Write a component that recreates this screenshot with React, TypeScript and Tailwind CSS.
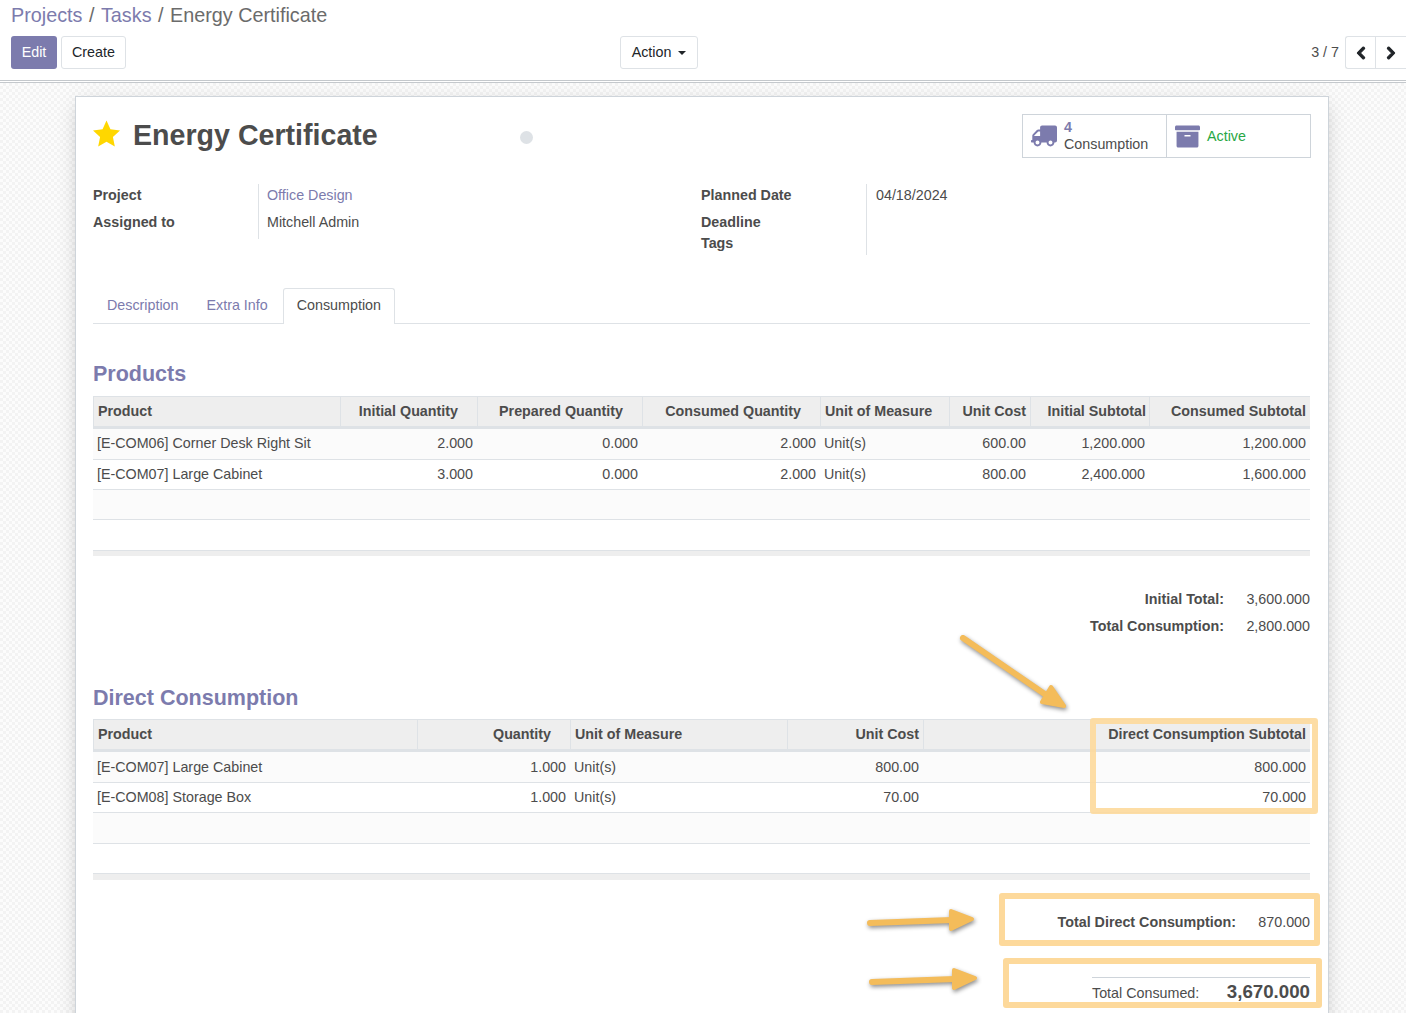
import { FaArchive, FaChevronLeft, FaChevronRight, FaTruck } from "react-icons/fa";

const productCols = [
  { label: "Product", w: "w-[248px]", th: "text-left pl-1 pr-1", td: "text-left pl-1 pr-1" },
  { label: "Initial Quantity", w: "w-[137px]", th: "text-right pr-[19px]", td: "text-right pr-[5px]" },
  { label: "Prepared Quantity", w: "w-[165px]", th: "text-right pr-[19px]", td: "text-right pr-[5px]" },
  { label: "Consumed Quantity", w: "w-[178px]", th: "text-right pr-[19px]", td: "text-right pr-[5px]" },
  { label: "Unit of Measure", w: "w-[129px]", th: "text-left pl-1", td: "text-left pl-[3px]" },
  { label: "Unit Cost", w: "w-[81px]", th: "text-right pr-1", td: "text-right pr-[5px]" },
  { label: "Initial Subtotal", w: "w-[119px]", th: "text-right pr-[3px]", td: "text-right pr-[5px]" },
  { label: "Consumed Subtotal", w: "w-[160px]", th: "text-right pr-1", td: "text-right pr-1" },
];

const productRows = [
  ["[E-COM06] Corner Desk Right Sit", "2.000", "0.000", "2.000", "Unit(s)", "600.00", "1,200.000", "1,200.000"],
  ["[E-COM07] Large Cabinet", "3.000", "0.000", "2.000", "Unit(s)", "800.00", "2,400.000", "1,600.000"],
];

const directCols = [
  { label: "Product", w: "w-[325px]", th: "text-left pl-1 pr-1", td: "text-left pl-1 pr-1" },
  { label: "Quantity", w: "w-[153px]", th: "text-right pr-[19px]", td: "text-right pr-[5px]" },
  { label: "Unit of Measure", w: "w-[217px]", th: "text-left pl-1", td: "text-left pl-[3px]" },
  { label: "Unit Cost", w: "w-[136px]", th: "text-right pr-1", td: "text-right pr-[5px]" },
  { label: "Direct Consumption Subtotal", w: "w-[386px]", th: "text-right pr-1", td: "text-right pr-1" },
];

const directRows = [
  ["[E-COM07] Large Cabinet", "1.000", "Unit(s)", "800.00", "800.000"],
  ["[E-COM08] Storage Box", "1.000", "Unit(s)", "70.00", "70.000"],
];

type Col = { label: string; w: string; th: string; td: string };

function DataTable({ cols, rows, direct }: { cols: Col[]; rows: string[][]; direct?: boolean }) {
  return (
    <table className="w-full table-fixed border-separate border-spacing-0">
      <thead>
        <tr>
          {cols.map((c) => (
            <th
              key={c.label}
              className={`${c.w} ${c.th} h-[33px] bg-[#eeeeee] border-t border-b-[3px] border-r border-[#dee2e6] first:border-l last:border-r-0 font-bold text-[#4c4c4c] whitespace-nowrap`}
            >
              {c.label}
            </th>
          ))}
        </tr>
      </thead>
      <tbody>
        {rows.map((row, i) => (
          <tr key={i} className={i % 2 === 0 ? "bg-[#fbfbfb]" : "bg-white"}>
            {row.map((v, j) => (
              <td
                key={j}
                className={`${cols[j].td} ${i === 0 ? "h-[31px]" : "h-[30px]"} ${direct && i === 0 ? "pt-[2px]" : ""} border-b border-[#dee2e6] whitespace-nowrap`}
              >
                {v}
              </td>
            ))}
          </tr>
        ))}
        <tr className="bg-[#fbfbfb]">
          <td colSpan={cols.length} className={`${direct ? "h-[31px]" : "h-[30px]"} border-b border-[#dee2e6]`} />
        </tr>
        <tr>
          <td colSpan={cols.length} className={direct ? "h-[29px]" : "h-[30px]"} />
        </tr>
      </tbody>
      <tfoot>
        <tr>
          <td colSpan={cols.length} className={`${direct ? "h-[7px]" : "h-[6px]"} bg-[#eeeeee] border-t border-[#dee2e6]`} />
        </tr>
      </tfoot>
    </table>
  );
}

function Arrows() {
  return (
    <svg
      className="absolute left-0 top-0 pointer-events-none drop-shadow-[1px_2px_2px_rgba(0,0,0,0.45)]"
      width="1406"
      height="1013"
      fill="#f4bc5a"
      stroke="#f4bc5a"
      strokeLinecap="round"
      strokeLinejoin="round"
    >
      <path d="M963 638 L1049 697" strokeWidth="6" fill="none" />
      <path d="M1051 687 L1064 706 L1042 702 Z" strokeWidth="4" />
      <path d="M870 923 L952 920" strokeWidth="6" fill="none" />
      <path d="M951 911 L972 919 L951 929 Z" strokeWidth="4" />
      <path d="M872 982 L955 979" strokeWidth="6" fill="none" />
      <path d="M954 970 L975 978 L954 988 Z" strokeWidth="4" />
    </svg>
  );
}

export default function App() {
  return (
    <div className="relative h-[1013px] overflow-hidden bg-white font-['Liberation_Sans',Arial,sans-serif] text-[14.3px] text-[#4c4c4c]">
      {/* Control panel */}
      <div className="h-[83px] border-b-[3px] border-double border-[#c4c8cc] pl-[11px]">
        <div className="h-[36px] pt-[2px] text-[19.8px] leading-[27px] text-[#6b6b6b] whitespace-nowrap">
          <span className="text-[#7c7bad]">Projects</span>
          <span className="px-[6.5px]">/</span>
          <span className="text-[#7c7bad]">Tasks</span>
          <span className="px-[6.5px]">/</span>
          <span>Energy Certificate</span>
        </div>
        <div className="flex items-center h-[33px]">
          <div className="flex gap-1 w-[609px]">
            <button className="h-[33px] w-[46px] rounded-[3px] bg-[#7c7bad] text-white">Edit</button>
            <button className="h-[33px] w-[65px] rounded-[3px] border border-[#dee2e6] text-[#212529]">Create</button>
          </div>
          <button className="flex items-center justify-center gap-[7px] h-[33px] w-[78px] rounded-[3px] border border-[#dee2e6] text-[#212529]">
            Action
            <span className="border-x-[4px] border-t-[4px] border-x-transparent border-t-[#212529]" />
          </button>
          <div className="ml-auto flex items-center">
            <span className="mr-[6px]">3 / 7</span>
            <div className="flex h-[33px] rounded-l-[3px] border border-r-0 border-[#dee2e6] text-[#212529]">
              <button className="flex w-[30px] items-center justify-center border-r border-[#dee2e6]">
                <FaChevronLeft size={14} stroke="currentColor" strokeWidth={40} />
              </button>
              <button className="flex w-[30px] items-center justify-center">
                <FaChevronRight size={14} stroke="currentColor" strokeWidth={40} />
              </button>
            </div>
          </div>
        </div>
      </div>

      {/* Form sheet */}
      <div className="h-[930px] bg-[#f8f8f8] bg-[repeating-conic-gradient(#f3f3f3_0_25%,#fcfcfc_0_50%)] bg-[length:6px_6px] px-[75px] pt-[13px]">
        <div className="w-[1254px] h-[1000px] bg-white border border-[#ced4da] shadow-[0_5px_20px_-5px_rgba(0,0,0,0.25)] pl-[17px] pr-[18px] pt-[17px]">
          <div className="flex items-start h-[44px]">
            <svg width="27" height="27" viewBox="0 0 24 24" className="mt-[6px] shrink-0" fill="#ffd700">
              <polygon points="12,0.5 15.5,8.3 24,9.3 17.7,15.1 19.4,23.5 12,19.3 4.6,23.5 6.3,15.1 0,9.3 8.5,8.3" />
            </svg>
            <h1 className="ml-[13px] mt-[3px] w-[387px] text-[28.6px] leading-[36px] font-bold">Energy Certificate</h1>
            <span className="mt-[17px] size-[13px] rounded-full bg-[#dee2e6]" />
            <div className="ml-auto mr-[-1px] flex h-[44px] w-[289px] border border-[#ced4da]">
              <div className="flex w-[144px] items-center border-r border-[#ced4da] pl-[8px]">
                <FaTruck size={26} className="-scale-x-100 text-[#7c7bad]" />
                <div className="ml-[7px] leading-[17px]">
                  <div className="font-bold text-[#7c7bad]">4</div>
                  <div>Consumption</div>
                </div>
              </div>
              <div className="flex flex-1 items-center pl-[8px]">
                <FaArchive size={25} className="text-[#7c7bad]" />
                <span className="ml-[7px] mt-[1px] text-[#28a745]">Active</span>
              </div>
            </div>
          </div>

          {/* Fields */}
          <div className="flex mt-[26px] h-[71px] items-start">
            <div className="flex w-[608px]">
              <div className="w-[166px] h-[55px] border-r border-[#dee2e6] font-bold">
                <div className="h-[27px] leading-[22px]">Project</div>
                <div className="h-[27px] leading-[22px]">Assigned to</div>
              </div>
              <div className="pl-[8px]">
                <div className="h-[27px] leading-[22px] text-[#7c7bad]">Office Design</div>
                <div className="h-[27px] leading-[22px]">Mitchell Admin</div>
              </div>
            </div>
            <div className="flex">
              <div className="w-[166px] h-[71px] border-r border-[#dee2e6] font-bold">
                <div className="h-[27px] leading-[22px]">Planned Date</div>
                <div className="h-[21px] leading-[22px]">Deadline</div>
                <div className="h-[21px] leading-[22px]">Tags</div>
              </div>
              <div className="pl-[9px] leading-[22px]">04/18/2024</div>
            </div>
          </div>

          {/* Tabs */}
          <div className="flex mt-[33px] h-[36px] border-b border-[#dee2e6]">
            <div className="h-[35px] pl-[14px] pr-[14px] leading-[34px] text-[#7c7bad]">Description</div>
            <div className="h-[35px] pl-[14px] pr-[15px] leading-[34px] text-[#7c7bad]">Extra Info</div>
            <div className="h-[36px] px-[13px] leading-[33px] bg-white border border-b-0 border-[#dee2e6] rounded-t-[3px]">Consumption</div>
          </div>

          <h2 className="mt-[36px] h-[36px] text-[21.5px] leading-[28px] font-bold text-[#7c7bad]">Products</h2>
          <DataTable cols={productCols} rows={productRows} />

          <div className="mt-[35px] flex flex-col items-end gap-[11px] leading-[16px]">
            <div className="flex">
              <span className="w-[180px] text-right font-bold">Initial Total:</span>
              <span className="w-[86px] text-right">3,600.000</span>
            </div>
            <div className="flex">
              <span className="w-[180px] text-right font-bold">Total Consumption:</span>
              <span className="w-[86px] text-right">2,800.000</span>
            </div>
          </div>

          <h2 className="mt-[50px] h-[35px] text-[21.5px] leading-[28px] font-bold text-[#7c7bad]">Direct Consumption</h2>
          <DataTable cols={directCols} rows={directRows} direct />

          <div className="mt-[34px] flex justify-end leading-[16px]">
            <span className="font-bold">Total Direct Consumption:</span>
            <span className="w-[74px] text-right">870.000</span>
          </div>
          <div className="ml-auto mt-[47px] w-[218px] border-t border-[#ced4da] flex items-end justify-between h-[26px]">
            <span className="leading-[16px] mb-[2px]">Total Consumed:</span>
            <span className="text-[18.7px] leading-[22px] font-bold">3,670.000</span>
          </div>
        </div>
      </div>

      {/* Annotations drawn over the screenshot */}
      <Arrows />
      <div className="absolute left-[1090px] top-[718px] w-[228px] h-[96px] rounded-[3px] border-[6px] border-[#fdd99b]/90" />
      <div className="absolute left-[999px] top-[893px] w-[321px] h-[53px] rounded-[3px] border-[6px] border-[#fdd99b]" />
      <div className="absolute left-[1003px] top-[958px] w-[319px] h-[50px] rounded-[3px] border-[6px] border-[#fdd99b]" />
    </div>
  );
}
